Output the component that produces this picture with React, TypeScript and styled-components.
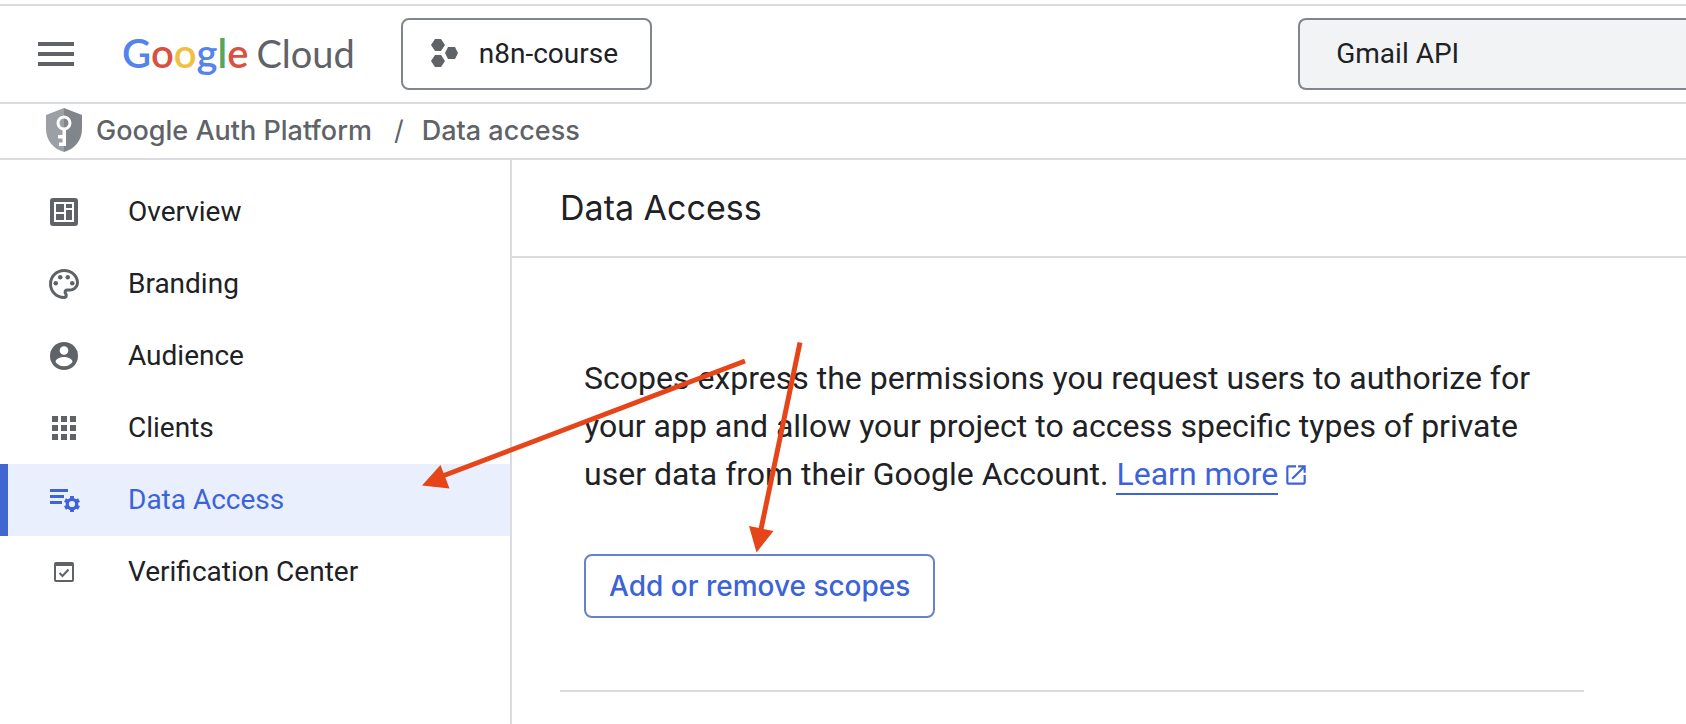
import React from 'react';
import styled, { createGlobalStyle } from 'styled-components';
import { MdOutlinePalette, MdOpenInNew } from 'react-icons/md';

const GlobalStyle = createGlobalStyle`
  *, *::before, *::after { box-sizing: border-box; }
  html, body, #root { height: 100%; }
  body {
    margin: 0;
    background: #fff;
    color: #202124;
    font-family: Roboto, "Liberation Sans", sans-serif;
    overflow: hidden;
  }
  button, input { font: inherit; color: inherit; }
`;

const line = '#dadce0';
const gray = '#5f6368';
const blue = '#3c64d8';
const brandFont = 'Inter, "Liberation Sans", sans-serif';

const Page = styled.div`
  position: relative;
  display: flex;
  flex-direction: column;
  min-height: 100%;
  padding-top: 4px;
`;

const TopBar = styled.header`
  display: flex;
  align-items: center;
  height: 100px;
  padding-left: 38px;
  border-top: 2px solid ${line};
  border-bottom: 2px solid ${line};
`;

const MenuButton = styled.button`
  display: flex;
  padding: 0;
  border: 0;
  background: none;
  color: ${gray};
`;

const Logo = styled.a`
  display: flex;
  align-items: baseline;
  gap: 8px;
  margin-left: 48px;
  padding-bottom: 2px;
  color: ${gray};
  font-family: Lato, "Liberation Sans", sans-serif;
  font-size: 38px;
  line-height: 48px;
  text-decoration: none;
`;

const LogoGoogle = styled.span`
  font-size: 40px;
  font-weight: 600;
`;

const LogoLetter = styled.span<{ $color: string }>`
  color: ${(p) => p.$color};
`;

const ProjectButton = styled.button`
  display: flex;
  align-items: center;
  gap: 20px;
  height: 72px;
  margin-left: 46px;
  padding: 0 32px 2px 28px;
  border: 2px solid #80868b;
  border-radius: 8px;
  background: #fff;
  font-size: 28px;
`;

const SearchBox = styled.input`
  width: 23vw;
  height: 72px;
  margin-left: auto;
  padding: 0 36px 2px;
  border: 2px solid #80868b;
  border-right: 0;
  border-radius: 8px 0 0 8px;
  background: #f1f3f4;
  font-size: 28px;
  outline: 0;
`;

const Breadcrumb = styled.nav`
  display: flex;
  align-items: center;
  height: 56px;
  padding: 0 46px 2px;
  border-bottom: 2px solid ${line};
  color: ${gray};
  font-family: ${brandFont};
  font-size: 27px;
  font-weight: 500;
`;

const Crumb = styled.a`
  margin-left: 14px;
  color: inherit;
  text-decoration: none;
`;

const Slash = styled.span`
  margin: 0 4px 0 22px;
  font-weight: 400;
`;

const Body = styled.div`
  display: flex;
  flex: 1;
`;

const Sidebar = styled.nav`
  flex: 0 0 512px;
  padding-top: 16px;
  border-right: 2px solid ${line};
`;

const NavItem = styled.a<{ $active?: boolean }>`
  display: flex;
  align-items: center;
  gap: 46px;
  height: 72px;
  padding-left: 38px;
  border-left: 8px solid ${(p) => (p.$active ? '#4166d0' : 'transparent')};
  background: ${(p) => (p.$active ? '#e9effd' : 'transparent')};
  background-clip: padding-box;
  color: ${(p) => (p.$active ? blue : '#202124')};
  font-size: 28px;
  text-decoration: none;

  svg {
    flex: none;
    color: ${(p) => (p.$active ? blue : gray)};
  }
`;

const NavLabel = styled.span`
  padding-bottom: 2px;
`;

const Main = styled.main`
  flex: 1;
  min-width: 0;
`;

const TitleBar = styled.div`
  display: flex;
  align-items: center;
  height: 98px;
  padding: 0 48px 2px;
  border-bottom: 2px solid ${line};
`;

const Title = styled.h1`
  margin: 0;
  font-family: ${brandFont};
  font-size: 34px;
  font-weight: 400;
`;

const Section = styled.section`
  margin: 0 102px 0 48px;
  padding: 96px 24px 72px;
  border-bottom: 2px solid ${line};
`;

const Intro = styled.p`
  max-width: 960px;
  margin: 0 0 56px;
  font-size: 32px;
  line-height: 48px;
`;

const LearnMore = styled.a`
  color: ${blue};
  text-decoration: none;
  white-space: nowrap;

  span {
    border-bottom: 2px solid ${blue};
  }

  svg {
    margin-left: 5px;
    vertical-align: -3px;
  }
`;

const ScopesButton = styled.button`
  height: 64px;
  padding: 0 23px;
  border: 2px solid #6682cc;
  border-radius: 8px;
  background: #fff;
  color: ${blue};
  font-family: ${brandFont};
  font-size: 28px;
  font-weight: 500;
`;

const Annotations = styled.svg`
  position: absolute;
  top: 0;
  left: 0;
  pointer-events: none;
`;

const MenuIcon = () => (
  <svg width="36" height="24" viewBox="0 0 36 24" fill="currentColor" aria-hidden="true">
    <path d="M0 0h36v4H0zM0 10h36v4H0zM0 20h36v4H0z" />
  </svg>
);

const ProjectIcon = () => (
  <svg width="28" height="28" viewBox="0 0 28 28" fill={gray} aria-hidden="true">
    <path d="M4 0h6l4 6-4 6H4L0 6zM4 16h6l4 6-4 6H4l-4-6zM17 8h7l3 6-3 6h-7l-3-6z" />
  </svg>
);

const ShieldIcon = () => (
  <svg width="36" height="44" viewBox="0 0 36 44" aria-hidden="true">
    <path d="M18 0 0 7v14c0 11 7 20 18 23z" fill="#9aa0a6" />
    <path d="m18 0 18 7v14c0 11-7 20-18 23z" fill="#80868b" />
    <circle cx="18" cy="15" r="6" fill="none" stroke="#fff" strokeWidth="3" />
    <path d="M16.500 21h3.500v17h-7v-3.500h3.500v-4h-4.500V27h4.500z" fill="#fff" />
  </svg>
);

const OverviewIcon = () => (
  <svg width="36" height="36" viewBox="0 0 36 36" fill="currentColor" aria-hidden="true">
    <path
      fillRule="evenodd"
      d="M7 4h22a3 3 0 0 1 3 3v22a3 3 0 0 1-3 3H7a3 3 0 0 1-3-3V7a3 3 0 0 1 3-3zm1 4v20h20V8zm2 2h8v8h-8zm10 0h6v4h-6zm0 6h6v10h-6zm-10 4h8v6h-8z"
    />
  </svg>
);

const AudienceIcon = () => (
  <svg width="36" height="36" viewBox="0 0 36 36" aria-hidden="true">
    <circle cx="18" cy="18" r="14" fill="currentColor" />
    <circle cx="18" cy="12.500" r="4.300" fill="#fff" />
    <path d="M9.500 24c0-3.500 5-5 8.500-5s8.500 1.500 8.500 5c-2 2.800-5 4.300-8.500 4.300S11.500 26.800 9.500 24z" fill="#fff" />
  </svg>
);

const ClientsIcon = () => (
  <svg width="36" height="36" viewBox="0 0 36 36" fill="currentColor" aria-hidden="true">
    <path d="M6 6h6v6H6zM15 6h6v6h-6zM24 6h6v6h-6zM6 15h6v6H6zM15 15h6v6h-6zM24 15h6v6h-6zM6 24h6v6H6zM15 24h6v6h-6zM24 24h6v6h-6z" />
  </svg>
);

const DataAccessIcon = () => (
  <svg width="36" height="36" viewBox="0 0 36 36" fill="currentColor" aria-hidden="true">
    <path d="M4 7h18v3H4zM4 13h14v3H4zM4 19h12v3H4z" />
    <circle cx="26" cy="22" r="4.700" fill="none" stroke="currentColor" strokeWidth="3.200" />
    <g stroke="currentColor" strokeWidth="3.800">
      <path d="M26 14v3M26 27v3M19 18l2.600 1.500M30.400 24.500 33 26M19 26l2.600-1.500M30.400 19.500 33 18" />
    </g>
  </svg>
);

const VerificationIcon = () => (
  <svg width="36" height="36" viewBox="0 0 36 36" aria-hidden="true">
    <path
      fillRule="evenodd"
      fill="currentColor"
      d="M10 8h16a2 2 0 0 1 2 2v16a2 2 0 0 1-2 2H10a2 2 0 0 1-2-2V10a2 2 0 0 1 2-2zm0 4v14h16V12z"
    />
    <path d="m13.500 19 3 3 6-6.500" fill="none" stroke="currentColor" strokeWidth="2" />
  </svg>
);

const navItems = [
  { label: 'Overview', icon: <OverviewIcon /> },
  { label: 'Branding', icon: <MdOutlinePalette size={36} /> },
  { label: 'Audience', icon: <AudienceIcon /> },
  { label: 'Clients', icon: <ClientsIcon /> },
  { label: 'Data Access', icon: <DataAccessIcon />, active: true },
  { label: 'Verification Center', icon: <VerificationIcon /> },
];

const googleLetters: [string, string][] = [
  ['G', '#5383ec'],
  ['o', '#d8523f'],
  ['o', '#f1bf42'],
  ['g', '#5383ec'],
  ['l', '#58a55c'],
  ['e', '#d8523f'],
];

export default function App() {
  return (
    <Page>
      <GlobalStyle />
      <TopBar>
        <MenuButton aria-label="Navigation menu">
          <MenuIcon />
        </MenuButton>
        <Logo href="#home">
          <LogoGoogle>
            {googleLetters.map(([letter, color], i) => (
              <LogoLetter key={i} $color={color}>{letter}</LogoLetter>
            ))}
          </LogoGoogle>
          <span>Cloud</span>
        </Logo>
        <ProjectButton>
          <ProjectIcon />
          n8n-course
        </ProjectButton>
        <SearchBox type="text" aria-label="Search" defaultValue="Gmail API" />
      </TopBar>
      <Breadcrumb aria-label="Breadcrumb">
        <ShieldIcon />
        <Crumb href="#auth">Google Auth Platform</Crumb>
        <Slash>/</Slash>
        <Crumb href="#scopes">Data access</Crumb>
      </Breadcrumb>
      <Body>
        <Sidebar aria-label="Google Auth Platform">
          {navItems.map(({ label, icon, active }) => (
            <NavItem key={label} href={`#${label}`} $active={active} aria-current={active ? 'page' : undefined}>
              {icon}
              <NavLabel>{label}</NavLabel>
            </NavItem>
          ))}
        </Sidebar>
        <Main>
          <TitleBar>
            <Title>Data Access</Title>
          </TitleBar>
          <Section>
            <Intro>
              Scopes express the permissions you request users to authorize for your app and allow your project to
              access specific types of private user data from their Google Account.{' '}
              <LearnMore href="#learn-more">
                <span>Learn more</span>
                <MdOpenInNew size={26} aria-hidden="true" />
              </LearnMore>
            </Intro>
            <ScopesButton>Add or remove scopes</ScopesButton>
          </Section>
        </Main>
      </Body>
      <Annotations width="820" height="570" viewBox="0 0 820 570" fill="#e64519" aria-hidden="true">
        <path d="M745 361 440 477M800 342.500 760 534" stroke="#e64519" strokeWidth="5" />
        <path d="m422 485.500 18.500-20.500 9 23.500zM756.500 552.500 749 526l24.500 5z" />
      </Annotations>
    </Page>
  );
}
